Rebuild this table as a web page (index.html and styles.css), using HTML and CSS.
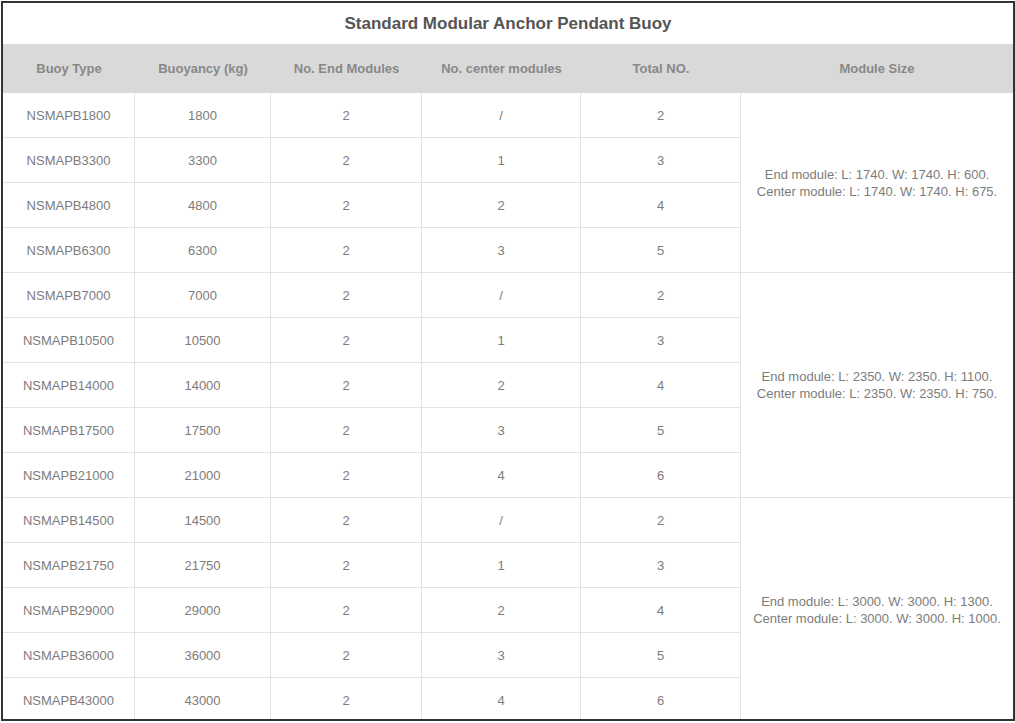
FILE: index.html
```html
<!DOCTYPE html>
<html lang="en">
<head>
<meta charset="utf-8">
<title>Standard Modular Anchor Pendant Buoy</title>
<link rel="stylesheet" href="styles.css">
</head>
<body>
<div class="frame">
  <table class="spec">
    <colgroup>
      <col class="c1"><col class="c2"><col class="c3"><col class="c4"><col class="c5"><col class="c6">
    </colgroup>
    <thead>
      <tr class="title-row"><th colspan="6" class="title">Standard Modular Anchor Pendant Buoy</th></tr>
      <tr class="head-row">
        <th>Buoy Type</th><th>Buoyancy (kg)</th><th>No. End Modules</th><th>No. center modules</th><th>Total NO.</th><th>Module Size</th>
      </tr>
    </thead>
    <tbody>
      <tr><td>NSMAPB1800</td><td>1800</td><td>2</td><td>/</td><td>2</td>
        <td rowspan="4" class="size">End module: L: 1740. W: 1740. H: 600.<br>Center module: L: 1740. W: 1740. H: 675.</td></tr>
      <tr><td>NSMAPB3300</td><td>3300</td><td>2</td><td>1</td><td>3</td></tr>
      <tr><td>NSMAPB4800</td><td>4800</td><td>2</td><td>2</td><td>4</td></tr>
      <tr><td>NSMAPB6300</td><td>6300</td><td>2</td><td>3</td><td>5</td></tr>
      <tr><td>NSMAPB7000</td><td>7000</td><td>2</td><td>/</td><td>2</td>
        <td rowspan="5" class="size">End module: L: 2350. W: 2350. H: 1100.<br>Center module: L: 2350. W: 2350. H: 750.</td></tr>
      <tr><td>NSMAPB10500</td><td>10500</td><td>2</td><td>1</td><td>3</td></tr>
      <tr><td>NSMAPB14000</td><td>14000</td><td>2</td><td>2</td><td>4</td></tr>
      <tr><td>NSMAPB17500</td><td>17500</td><td>2</td><td>3</td><td>5</td></tr>
      <tr><td>NSMAPB21000</td><td>21000</td><td>2</td><td>4</td><td>6</td></tr>
      <tr><td>NSMAPB14500</td><td>14500</td><td>2</td><td>/</td><td>2</td>
        <td rowspan="5" class="size">End module: L: 3000. W: 3000. H: 1300.<br>Center module: L: 3000. W: 3000. H: 1000.</td></tr>
      <tr><td>NSMAPB21750</td><td>21750</td><td>2</td><td>1</td><td>3</td></tr>
      <tr><td>NSMAPB29000</td><td>29000</td><td>2</td><td>2</td><td>4</td></tr>
      <tr><td>NSMAPB36000</td><td>36000</td><td>2</td><td>3</td><td>5</td></tr>
      <tr><td>NSMAPB43000</td><td>43000</td><td>2</td><td>4</td><td>6</td></tr>
    </tbody>
  </table>
</div>
</body>
</html>
```
FILE: styles.css
```css
html, body {
  margin: 0;
  padding: 0;
  background: #ffffff;
}

body {
  font-family: "Liberation Sans", Arial, sans-serif;
  padding: 1px 0 0 1px;
}

.frame {
  width: 1010px;
  height: 716px;
  border: 2px solid #333333;
  overflow: hidden;
  background: #ffffff;
}

.spec {
  width: 1010px;
  table-layout: fixed;
  border-collapse: separate;
  border-spacing: 0;
}

.c1 { width: 132px; }
.c2 { width: 136px; }
.c3 { width: 151px; }
.c4 { width: 159px; }
.c5 { width: 160px; }
.c6 { width: 272px; }

.title-row { height: 41px; }

.title {
  font-size: 17px;
  font-weight: bold;
  color: #555555;
  text-align: center;
  padding: 0;
  background: #ffffff;
}

.head-row { height: 49px; }

.head-row th {
  background: #d9d9d9;
  color: #888888;
  font-size: 13px;
  font-weight: bold;
  text-align: center;
  padding: 0;
}

tbody tr { height: 45px; }

tbody td {
  padding: 0;
  font-size: 13px;
  color: #7c7c7c;
  text-align: center;
  vertical-align: middle;
  border-right: 1px solid #e2e2e2;
  border-bottom: 1px solid #e2e2e2;
}

tbody td.size {
  border-right: none;
  line-height: 17px;
}
```
